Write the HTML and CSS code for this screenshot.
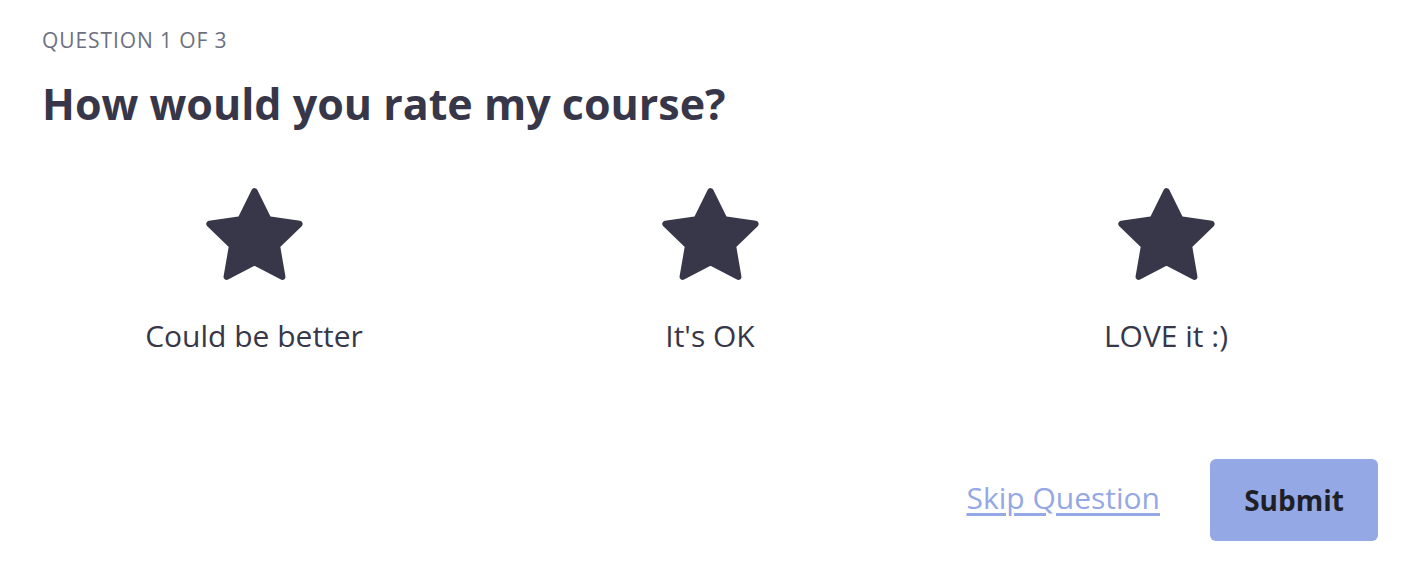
FILE: index.html
```html
<!DOCTYPE html>
<html>
<head>
<meta charset="utf-8">
<link rel="stylesheet" href="styles.css">
</head>
<body>
<div class="page">
  <div class="eyebrow">QUESTION 1 OF 3</div>
  <h1 class="title">How would you rate my course?</h1>
  <div class="options">
    <div class="option">
      <svg class="star" viewBox="0 0 100 100" width="103" height="103"><polygon points="50,6 63.52,33.39 93.75,37.79 71.88,59.11 77.04,89.21 50,75 22.96,89.21 28.12,59.11 6.25,37.79 36.48,33.39"/></svg>
      <div class="label">Could be better</div>
    </div>
    <div class="option">
      <svg class="star" viewBox="0 0 100 100" width="103" height="103"><polygon points="50,6 63.52,33.39 93.75,37.79 71.88,59.11 77.04,89.21 50,75 22.96,89.21 28.12,59.11 6.25,37.79 36.48,33.39"/></svg>
      <div class="label">It's OK</div>
    </div>
    <div class="option">
      <svg class="star" viewBox="0 0 100 100" width="103" height="103"><polygon points="50,6 63.52,33.39 93.75,37.79 71.88,59.11 77.04,89.21 50,75 22.96,89.21 28.12,59.11 6.25,37.79 36.48,33.39"/></svg>
      <div class="label">LOVE it :)</div>
    </div>
  </div>
  <div class="actions">
    <a class="skip" href="#">Skip Question</a>
    <button class="submit">Submit</button>
  </div>
</div>
</body>
</html>
```

FILE: styles.css
```css
* { box-sizing: border-box; }
html, body { margin: 0; padding: 0; background: #ffffff; }
body { font-family: "Open Sans", "Lato", sans-serif; color: #373749; }
.page { padding: 28px 34px 0 42px; }
.eyebrow { font-size: 21px; color: #6e7080; letter-spacing: 0.9px; line-height: 24px; }
.title { margin: 26px 0 0; font-size: 43px; font-weight: 700; line-height: 52px; color: #373749; }
.options { display: grid; grid-template-columns: repeat(3, 456px); margin: 55px 0 0 -16px; }
.option { display: flex; flex-direction: column; align-items: center; }
.star { display: block; }
.star polygon { fill: #373749; stroke: #373749; stroke-width: 6; stroke-linejoin: round; }
.label { margin-top: 30px; font-size: 30px; line-height: 36px; color: #373749; }
.actions { display: flex; justify-content: flex-end; align-items: center; gap: 50px; margin-top: 105px; }
.skip { font-size: 30px; line-height: 36px; color: #94a8e6; text-decoration: underline; text-underline-offset: 4px; margin-top: -4px; }
.submit { width: 168px; height: 82px; border: none; border-radius: 6px; background: #94a8e6; font-family: inherit; font-size: 28px; font-weight: 700; color: #1f1f26; }
```
